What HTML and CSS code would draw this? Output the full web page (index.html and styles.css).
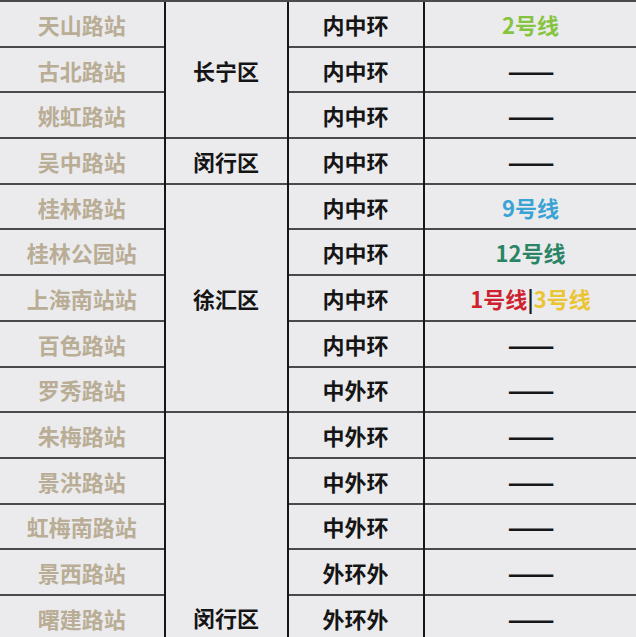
FILE: index.html
```html
<!DOCTYPE html>
<html lang="zh-CN">
<head>
<meta charset="utf-8">
<title>站点表</title>
<link rel="stylesheet" href="styles.css">
</head>
<body>
<table class="grid">
  <colgroup>
    <col class="c1"><col class="c2"><col class="c3"><col class="c4">
  </colgroup>
  <tbody>
    <tr><td class="st">天山路站</td><td class="dist" rowspan="3">长宁区</td><td class="ring">内中环</td><td class="line"><span class="l2">2号线</span></td></tr>
    <tr><td class="st">古北路站</td><td class="ring">内中环</td><td class="line"><span class="dash">——</span></td></tr>
    <tr><td class="st">姚虹路站</td><td class="ring">内中环</td><td class="line"><span class="dash">——</span></td></tr>
    <tr><td class="st">吴中路站</td><td class="dist">闵行区</td><td class="ring">内中环</td><td class="line"><span class="dash">——</span></td></tr>
    <tr><td class="st">桂林路站</td><td class="dist" rowspan="5">徐汇区</td><td class="ring">内中环</td><td class="line"><span class="l9">9号线</span></td></tr>
    <tr><td class="st">桂林公园站</td><td class="ring">内中环</td><td class="line"><span class="l12">12号线</span></td></tr>
    <tr><td class="st">上海南站站</td><td class="ring">内中环</td><td class="line"><span class="l1">1号线</span><span class="sep">|</span><span class="l3">3号线</span></td></tr>
    <tr><td class="st">百色路站</td><td class="ring">内中环</td><td class="line"><span class="dash">——</span></td></tr>
    <tr><td class="st">罗秀路站</td><td class="ring">中外环</td><td class="line"><span class="dash">——</span></td></tr>
    <tr><td class="st">朱梅路站</td><td class="dist bottom" rowspan="5">闵行区</td><td class="ring">中外环</td><td class="line"><span class="dash">——</span></td></tr>
    <tr><td class="st">景洪路站</td><td class="ring">中外环</td><td class="line"><span class="dash">——</span></td></tr>
    <tr><td class="st">虹梅南路站</td><td class="ring">中外环</td><td class="line"><span class="dash">——</span></td></tr>
    <tr><td class="st">景西路站</td><td class="ring">外环外</td><td class="line"><span class="dash">——</span></td></tr>
    <tr><td class="st">曙建路站</td><td class="ring">外环外</td><td class="line"><span class="dash">——</span></td></tr>
  </tbody>
</table>
</body>
</html>
```
FILE: styles.css
```css
html, body {
  margin: 0;
  padding: 0;
  background: #ebebed;
  overflow: hidden;
}
body {
  font-family: "Noto Sans CJK SC", "Noto Sans", sans-serif;
  font-weight: 700;
  font-size: 22px;
}
.grid {
  border-collapse: collapse;
  table-layout: fixed;
  width: 637px;
  margin: 0 0 0 -1px;
  border-top: 1px solid #3a3a3a;
}
.c1 { width: 165px; }
.c2 { width: 123px; }
.c3 { width: 136px; }
.c4 { width: 213px; }
.grid tr { height: 45.7px; }
.grid td {
  padding: 0;
  text-align: center;
  vertical-align: middle;
  line-height: 1;
  border-top: 2px solid #4a4a4a;
  border-left: 2px solid #151515;
  color: #151515;
}
.grid td.st {
  color: #b9ad95;
  border-left: 1px solid #d8d8da;
}
.grid td.bottom {
  vertical-align: bottom;
  padding-bottom: 13px;
}
.dash {
  display: inline-block;
  color: #161616;
  font-family: "Noto Sans CJK SC", sans-serif;
  font-weight: 900;
  letter-spacing: -1px;
  transform: scaleX(1.25);
}
.l2 { color: #86c440; }
.l9 { color: #3aa3d6; }
.l12 { color: #2a8466; }
.l1 { color: #cf2231; }
.l3 { color: #ebc431; }
.sep { color: #1a1a1a; }
```
